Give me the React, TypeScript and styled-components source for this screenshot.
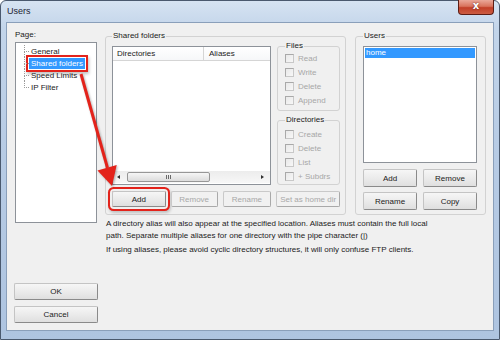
import React from "react";
import styled, { createGlobalStyle, css } from "styled-components";

const GlobalStyle = createGlobalStyle`
  html, body {
    margin: 0;
    padding: 0;
    background: #ffffff;
  }
  body {
    font-family: "Liberation Sans", Arial, sans-serif;
    font-size: 8px;
    color: #1b1b1b;
  }
  * {
    box-sizing: border-box;
  }
`;

const RED = "#e3231b";

const Page = styled.div`
  position: relative;
  width: 504px;
  height: 342px;
`;

const Window = styled.div`
  width: 500px;
  height: 340px;
  display: flex;
  flex-direction: column;
  border: 1px solid #4a596e;
  border-radius: 6px 6px 0 0;
  padding: 0 5px 8px 5px;
  background: linear-gradient(180deg, #d6e3f2 0%, #c3d5ea 8%, #b8cce5 40%, #aec4e0 100%);
`;

const TitleBar = styled.div`
  height: 21px;
  display: flex;
  align-items: flex-start;
  justify-content: space-between;
  flex-shrink: 0;
`;

const Title = styled.span`
  font-size: 9px;
  color: #1c2533;
  padding: 5px 0 0 1px;
`;

const CloseButton = styled.div`
  width: 36px;
  height: 15px;
  margin-top: -1px;
  border: 1px solid #5d1d15;
  border-top: none;
  border-radius: 0 0 4px 4px;
  background: linear-gradient(180deg, #eaa899 0%, #d9735d 45%, #c23f28 55%, #cc5d43 100%);
  display: flex;
  align-items: center;
  justify-content: center;
  color: #ffffff;
  font-family: "DejaVu Sans", sans-serif;
  font-weight: bold;
  font-size: 10px;
  text-shadow: 0 0 2px #5d1d15;
  line-height: 1;
  padding-bottom: 2px;
`;

const Client = styled.div`
  flex: 1;
  display: flex;
  background: #f0f0f0;
  border: 1px solid #8a9fba;
  padding: 0 7px 7px 7px;
`;

const LeftColumn = styled.div`
  width: 83px;
  display: flex;
  flex-direction: column;
`;

const Label = styled.div`
  height: 10px;
  line-height: 10px;
  margin-top: 7px;
  padding-left: 1px;
`;

const TreeBox = styled.ul`
  margin: 2px 0 0 1px;
  height: 181px;
  list-style: none;
  background: #ffffff;
  border: 1px solid #8d9299;
  padding: 2px 0 0 13px;
`;

const TreeItem = styled.li`
  position: relative;
  height: 12px;
  display: flex;
  align-items: center;

  &::before {
    content: "";
    position: absolute;
    left: -5px;
    top: 0;
    width: 4px;
    height: 6px;
    border-left: 1px dotted #9a9a9a;
    border-bottom: 1px dotted #9a9a9a;
  }

  &:not(:last-child)::after {
    content: "";
    position: absolute;
    left: -5px;
    top: 6px;
    height: 6px;
    border-left: 1px dotted #9a9a9a;
  }
`;

const TreeText = styled.span<{ $selected?: boolean; $marked?: boolean }>`
  line-height: 11px;
  padding: 0 2px;
  ${(p) =>
    p.$selected &&
    css`
      background: #3399ff;
      color: #ffffff;
    `}
  ${(p) =>
    p.$marked &&
    css`
      box-shadow: 0 0 0 1px #ffffff, 0 0 0 3px ${RED}, 1px 2px 3px 3px rgba(0, 0, 0, 0.25);
    `}
`;

const Spacer = styled.div`
  flex: 1;
`;

const Button = styled.button<{ $disabled?: boolean; $marked?: boolean; $w?: number; $h?: number }>`
  font-family: inherit;
  font-size: 8px;
  ${(p) => p.$w && `width: ${p.$w}px;`}
  height: ${(p) => p.$h ?? 16}px;
  padding: 0;
  border: 1px solid #8a8a8a;
  border-top-color: #c4c4c4;
  border-left-color: #c4c4c4;
  border-radius: 2px;
  background: linear-gradient(180deg, #f6f6f6 0%, #ebebeb 50%, #dfdfdf 100%);
  color: #1b1b1b;
  display: flex;
  align-items: center;
  justify-content: center;
  ${(p) =>
    p.$disabled &&
    css`
      color: #a8a8a8;
      border-color: #c9c9c9;
      border-right-color: #a9a9a9;
      border-bottom-color: #a9a9a9;
      background: #f1f1f1;
    `}
  ${(p) =>
    p.$marked &&
    css`
      box-shadow: 0 0 0 2px #f0f0f0, 0 0 0 4px ${RED}, 1px 2px 3px 4px rgba(0, 0, 0, 0.2);
    `}
`;

const DialogButton = styled(Button)`
  width: 84px;
  height: 17px;
  & + & {
    margin-top: 6px;
  }
`;

const Main = styled.div`
  margin-left: 8px;
  width: 381px;
  display: flex;
  flex-direction: column;
`;

const GroupRow = styled.div`
  margin-top: 8px;
  display: flex;
  gap: 9px;
`;

const Group = styled.fieldset<{ $w: number; $pad: string }>`
  margin: 0;
  min-width: 0;
  width: ${(p) => p.$w}px;
  border: 1px solid #d2d2d2;
  border-radius: 3px;
  padding: ${(p) => p.$pad};
  display: flex;
  flex-direction: column;
`;

const Legend = styled.legend`
  height: 10px;
  line-height: 10px;
  padding: 0 1px;
  margin-left: 0;
`;

const SharedTop = styled.div`
  display: flex;
  gap: 6px;
`;

const ListView = styled.div`
  margin-top: 5px;
  width: 159px;
  height: 139px;
  border: 1px solid #8d9299;
  background: #ffffff;
  display: flex;
  flex-direction: column;
`;

const ListHeader = styled.div`
  height: 14px;
  display: flex;
  border-bottom: 1px solid #d5d5d5;
  background: linear-gradient(180deg, #ffffff 0%, #f6f7f9 100%);
`;

const HeaderCell = styled.div<{ $w?: number }>`
  ${(p) => (p.$w ? `width: ${p.$w}px;` : "flex: 1;")}
  padding-left: 4px;
  line-height: 13px;
  border-right: 1px solid #d5d5d5;
  &:last-child {
    border-right: none;
    padding-left: 5px;
  }
`;

const ListBody = styled.div`
  flex: 1;
`;

const HScroll = styled.div`
  height: 12px;
  margin-bottom: 1px;
  display: flex;
  align-items: center;
  background: linear-gradient(180deg, #ececec, #f7f7f7);
  padding: 0 6px 0 4px;
`;

const ArrowGlyph = styled.span<{ $dir: "left" | "right" }>`
  width: 0;
  height: 0;
  border-top: 2px solid transparent;
  border-bottom: 2px solid transparent;
  ${(p) =>
    p.$dir === "left"
      ? css`
          border-right: 3px solid #303030;
        `
      : css`
          border-left: 3px solid #303030;
        `}
`;

const Thumb = styled.div`
  margin-left: 7px;
  width: 83px;
  height: 10px;
  border: 1px solid #979797;
  border-radius: 2px;
  background: linear-gradient(180deg, #f6f6f6, #dcdcdc);
  display: flex;
  align-items: center;
  justify-content: center;
  gap: 1px;
`;

const Grip = styled.span`
  width: 1px;
  height: 4px;
  background: #6a6a6a;
`;

const ScrollGap = styled.div`
  flex: 1;
`;

const RightColumn = styled.div`
  width: 63px;
  display: flex;
  flex-direction: column;
  gap: 4px;
`;

const CheckGroup = styled.fieldset<{ $pt: number; $pb: number }>`
  margin: 0;
  min-width: 0;
  border: 1px solid #d2d2d2;
  border-radius: 3px;
  padding: ${(p) => `${p.$pt}px 2px ${p.$pb}px 7px`};
`;

const CheckRow = styled.div`
  height: 14px;
  display: flex;
  align-items: center;
  gap: 4px;
  color: #a7a7a7;
`;

const Box = styled.span`
  width: 9px;
  height: 9px;
  border: 1px solid #a9a9a9;
  border-right-color: #c8c8c8;
  border-bottom-color: #c8c8c8;
  background: linear-gradient(135deg, #e9e9e9, #f7f7f7);
`;

const ButtonRow = styled.div`
  margin-top: 6px;
  display: flex;
  gap: 5px;
`;

const UsersList = styled.div`
  margin-top: 5px;
  height: 117px;
  border: 1px solid #8d9299;
  background: #ffffff;
  padding: 1px;
`;

const UserRow = styled.div<{ $selected?: boolean }>`
  height: 10px;
  line-height: 10px;
  padding-left: 1px;
  ${(p) =>
    p.$selected &&
    css`
      background: #3399ff;
      color: #ffffff;
    `}
`;

const UserButtons = styled.div`
  margin-top: 6px;
  display: grid;
  grid-template-columns: 1fr 1fr;
  gap: 5px 6px;
`;

const Notes = styled.div`
  margin-top: 3px;
  line-height: 12px;
  padding-left: 1px;
`;

const Note = styled.p`
  margin: 0 0 2px 0;
`;

const Annotation = styled.svg`
  position: absolute;
  left: 0;
  top: 0;
  pointer-events: none;
  filter: drop-shadow(1px 1px 1px rgba(0, 0, 0, 0.3));
`;

const fileRights = ["Read", "Write", "Delete", "Append"];
const dirRights = ["Create", "Delete", "List", "+ Subdrs"];

export default function App() {
  return (
    <Page>
      <GlobalStyle />
      <Window>
        <TitleBar>
          <Title>Users</Title>
          <CloseButton>x</CloseButton>
        </TitleBar>
        <Client>
          <LeftColumn>
            <Label>Page:</Label>
            <TreeBox>
              <TreeItem>
                <TreeText>General</TreeText>
              </TreeItem>
              <TreeItem>
                <TreeText $selected $marked>
                  Shared folders
                </TreeText>
              </TreeItem>
              <TreeItem>
                <TreeText>Speed Limits</TreeText>
              </TreeItem>
              <TreeItem>
                <TreeText>IP Filter</TreeText>
              </TreeItem>
            </TreeBox>
            <Spacer />
            <DialogButton>OK</DialogButton>
            <DialogButton>Cancel</DialogButton>
          </LeftColumn>

          <Main>
            <GroupRow>
              <Group $w={241} $pad="0 5px 7px 6px">
                <Legend>Shared folders</Legend>
                <SharedTop>
                  <ListView>
                    <ListHeader>
                      <HeaderCell $w={91}>Directories</HeaderCell>
                      <HeaderCell>Aliases</HeaderCell>
                    </ListHeader>
                    <ListBody />
                    <HScroll>
                      <ArrowGlyph $dir="left" />
                      <Thumb>
                        <Grip />
                        <Grip />
                        <Grip />
                      </Thumb>
                      <ScrollGap />
                      <ArrowGlyph $dir="right" />
                    </HScroll>
                  </ListView>
                  <RightColumn>
                    <CheckGroup $pt={0} $pb={3}>
                      <Legend>Files</Legend>
                      {fileRights.map((r) => (
                        <CheckRow key={r}>
                          <Box />
                          {r}
                        </CheckRow>
                      ))}
                    </CheckGroup>
                    <CheckGroup $pt={2} $pb={1}>
                      <Legend>Directories</Legend>
                      {dirRights.map((r) => (
                        <CheckRow key={r}>
                          <Box />
                          {r}
                        </CheckRow>
                      ))}
                    </CheckGroup>
                  </RightColumn>
                </SharedTop>
                <ButtonRow>
                  <Button $marked $w={54}>
                    Add
                  </Button>
                  <Button $disabled $w={47}>
                    Remove
                  </Button>
                  <Button $disabled $w={49}>
                    Rename
                  </Button>
                  <Button $disabled $w={64}>
                    Set as home dir
                  </Button>
                </ButtonRow>
              </Group>

              <Group $w={131} $pad="0 8px 4px 7px">
                <Legend>Users</Legend>
                <UsersList>
                  <UserRow $selected>home</UserRow>
                </UsersList>
                <UserButtons>
                  <Button $h={18}>Add</Button>
                  <Button $h={18}>Remove</Button>
                  <Button $h={18}>Rename</Button>
                  <Button $h={18}>Copy</Button>
                </UserButtons>
              </Group>
            </GroupRow>

            <Notes>
              <Note>
                A directory alias will also appear at the specified location. Aliases must contain the full local
                <br />
                path. Separate multiple aliases for one directory with the pipe character (|)
              </Note>
              <Note>If using aliases, please avoid cyclic directory structures, it will only confuse FTP clients.</Note>
            </Notes>
          </Main>
        </Client>
      </Window>

      <Annotation width="504" height="342" viewBox="0 0 504 342">
        <line x1="81" y1="74" x2="107.5" y2="168" stroke={RED} strokeWidth="3" />
        <polygon points="112,186 97.5,170.4 116.7,165" fill={RED} />
      </Annotation>
    </Page>
  );
}
